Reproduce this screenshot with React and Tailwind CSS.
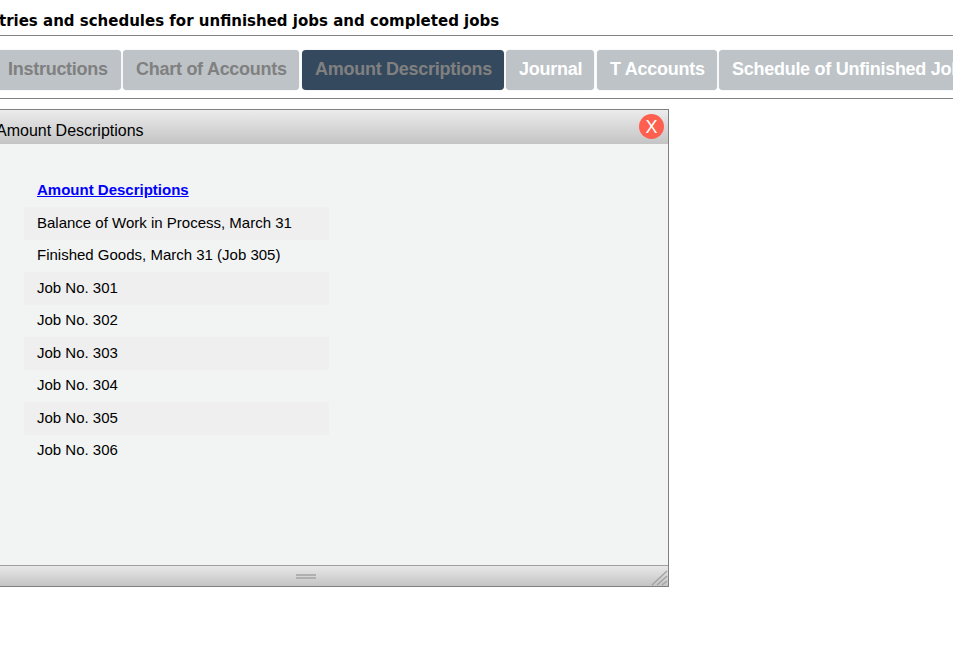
import React from 'react';

const tabs = [
  { name: 'Instructions', w: 'w-[126px] -ml-[5px]', text: 'text-[#808080]', bg: 'bg-[#bdc3c7]' },
  { name: 'Chart of Accounts', w: 'w-[176px]', text: 'text-[#808080]', bg: 'bg-[#bdc3c7]' },
  { name: 'Amount Descriptions', w: 'w-[202px] ml-[1px]', text: 'text-[#808080]', bg: 'bg-[#34495e]' },
  { name: 'Journal', w: 'w-[88px]', text: 'text-white', bg: 'bg-[#bdc3c7]' },
  { name: 'T Accounts', w: 'w-[120px] ml-[1px]', text: 'text-white', bg: 'bg-[#bdc3c7]' },
  { name: 'Schedule of Unfinished Jobs', w: 'w-[270px]', text: 'text-white', bg: 'bg-[#bdc3c7]' },
];

const rows = [
  'Balance of Work in Process, March 31',
  'Finished Goods, March 31 (Job 305)',
  'Job No. 301',
  'Job No. 302',
  'Job No. 303',
  'Job No. 304',
  'Job No. 305',
  'Job No. 306',
];

export default function App() {
  return (
    <div className="h-[655px] w-[953px] overflow-hidden bg-white font-['Liberation_Sans',Arial,sans-serif] text-black">
      <div className="h-9 border-b border-[#808080] pt-3">
        <h1 className="-ml-[87px] whitespace-nowrap font-['DejaVu_Sans',Verdana,sans-serif] text-[15px] leading-[18px] font-bold">
          Journal entries and schedules for unfinished jobs and completed jobs
        </h1>
      </div>

      <div className="mt-[14px] flex h-[49px] gap-[2px] border-b border-[#808080] pb-2">
        {tabs.map((t) => (
          <div
            key={t.name}
            className={`flex h-10 shrink-0 items-center rounded-[4px] pb-[2px] pl-[13px] text-lg font-bold tracking-[-0.27px] whitespace-nowrap shadow-[0_0_1px_#bbb] ${t.w} ${t.bg} ${t.text}`}
          >
            {t.name}
          </div>
        ))}
      </div>

      <div className="relative mt-[10px] -ml-[10px] flex h-[478px] w-[679px] flex-col border border-[#808080] bg-[#f2f4f4]">
        <div className="flex h-[34px] items-center bg-gradient-to-b from-[#ececec] to-[#c4c4c4] pt-[7px] pl-[5px] text-base">
          Amount Descriptions
        </div>
        <div className="absolute top-[4px] right-[4px] flex h-[25px] w-[25px] items-center justify-center rounded-full bg-[#ff5f4e] text-lg leading-none text-white">
          X
        </div>

        <div className="flex-1 pt-[29px] pl-[33px]">
          <a href="#" className="ml-[13px] block h-[34px] text-[15px] leading-[34px] font-bold text-[#0000ff] underline">
            Amount Descriptions
          </a>
          <div className="w-[305px]">
            {rows.map((r, i) => (
              <div
                key={r}
                className={`h-[32.5px] pt-[0.5px] pl-[13px] text-[15px] leading-[30px] ${i % 2 === 0 ? 'bg-[#efefef]' : ''}`}
              >
                {r}
              </div>
            ))}
          </div>
        </div>

        <div className="relative flex h-[21px] items-center justify-center border-t border-[#a0a0a0] bg-gradient-to-b from-[#e8e8e8] to-[#c4c4c4]">
          <div className="ml-[-47px] h-[5px] w-5 border-y-2 border-[#b0b0b0]" />
          <svg className="absolute right-0 bottom-0" width="17" height="16" viewBox="0 0 17 16">
            <path d="M1 15 16 1M6 15 16 6M11 15 16 11" stroke="#a0a0a0" strokeWidth="1.3" fill="none" />
          </svg>
        </div>
      </div>
    </div>
  );
}
